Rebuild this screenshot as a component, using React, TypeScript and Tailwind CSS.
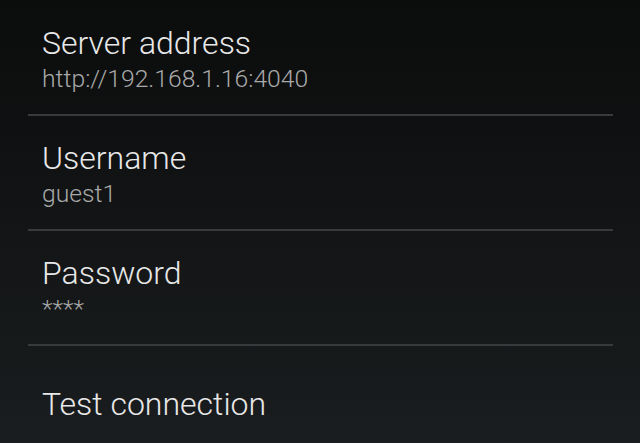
import React from 'react';

const items = [
  { title: 'Server address', value: 'http://192.168.1.16:4040' },
  { title: 'Username', value: 'guest1' },
  { title: 'Password', value: '****' },
  { title: 'Test connection' },
];

const App = () => {
  return (
    <div
      className="h-[443px] w-[640px] overflow-hidden bg-gradient-to-b from-[#0b0c0c] to-[#1a1d1f] px-[28px] pt-[1px]"
      style={{ fontFamily: 'Roboto, "Noto Sans", sans-serif' }}
    >
      <div className="w-[585px]">
        {items.map((item, i) => (
          <div
            key={item.title}
            className={`flex h-[115px] flex-col justify-center pl-[14px] ${
              i < items.length - 1 ? 'border-b-2 border-[#383b3d]' : ''
            }`}
          >
            <div className="text-[32px] leading-[42px] font-light text-[#e8e8e8]">{item.title}</div>
            {item.value && (
              <div className="text-[24.7px] leading-[30px] font-light text-[#a9a9a9]">{item.value}</div>
            )}
          </div>
        ))}
      </div>
    </div>
  );
};

export default App;
